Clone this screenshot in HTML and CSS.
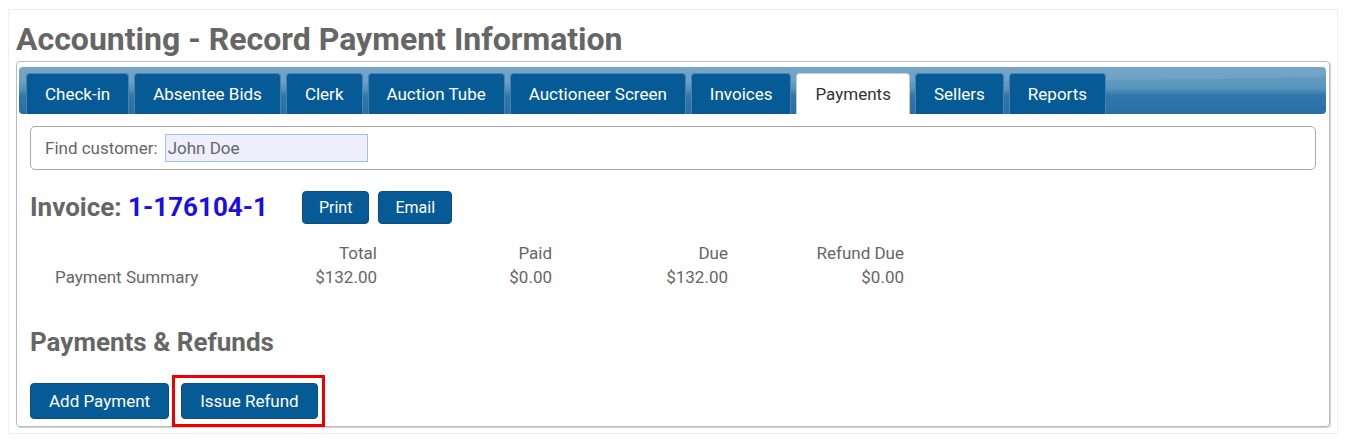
FILE: index.html
```html
<!DOCTYPE html>
<html lang="en">
<head>
  <meta charset="UTF-8">
  <title>Accounting - Record Payment Information</title>
  <link rel="stylesheet" href="styles.css">
</head>
<body>
  <div class="page">
    <h1 class="page-title">Accounting - Record Payment Information</h1>

    <div class="panel">
      <ul class="tabs">
        <li class="tab">Check-in</li>
        <li class="tab">Absentee Bids</li>
        <li class="tab">Clerk</li>
        <li class="tab">Auction Tube</li>
        <li class="tab">Auctioneer Screen</li>
        <li class="tab">Invoices</li>
        <li class="tab active">Payments</li>
        <li class="tab">Sellers</li>
        <li class="tab">Reports</li>
      </ul>

      <div class="content">
        <div class="find-box">
          <label for="customer">Find customer:</label>
          <input type="text" id="customer" value="John Doe">
        </div>

        <div class="invoice-row">
          <h2 class="invoice-title">Invoice: <span class="invoice-no">1-176104-1</span></h2>
          <button class="btn btn-small">Print</button>
          <button class="btn btn-small">Email</button>
        </div>

        <div class="summary">
          <div></div>
          <div class="num">Total</div>
          <div class="num">Paid</div>
          <div class="num">Due</div>
          <div class="num">Refund Due</div>
          <div>Payment Summary</div>
          <div class="num">$132.00</div>
          <div class="num">$0.00</div>
          <div class="num">$132.00</div>
          <div class="num">$0.00</div>
        </div>

        <h2 class="section-title">Payments &amp; Refunds</h2>

        <div class="actions">
          <button class="btn">Add Payment</button>
          <div class="highlight">
            <button class="btn">Issue Refund</button>
          </div>
        </div>
      </div>
    </div>
  </div>
</body>
</html>
```

FILE: styles.css
```css
body {
  margin: 0;
  padding: 9px 10px 10px 8px;
  font-family: Roboto, "Liberation Sans", Arial, sans-serif;
  color: #555;
  background: #fff;
}

.page {
  border: 1px solid #eee;
  padding: 0 7px 7px 7px;
  height: 425px;
  box-sizing: border-box;
}

.page-title {
  margin: 0;
  padding-top: 10px;
  height: 51px;
  box-sizing: border-box;
  font-size: 32px;
  font-weight: bold;
  color: #666;
  line-height: 38px;
}

.panel {
  border: 1px solid #bbb;
  box-shadow: 1px 1px 1px #ccc;
  border-radius: 4px;
  padding: 5px 3px 0 2px;
  height: 366px;
  box-sizing: border-box;
}

.tabs {
  list-style: none;
  margin: 0;
  padding: 6px 7px 0 7px;
  display: flex;
  gap: 5px;
  height: 47px;
  box-sizing: border-box;
  border-radius: 4px;
  background:
    radial-gradient(ellipse 140% 60% at 30% 0%, rgba(255,255,255,0.08) 60%, transparent 61%),
    linear-gradient(#6a9fc4 0%, #5b95bd 45%, #3079ac 60%, #2a6ea3 100%);
}

.tab {
  padding: 0 18px;
  height: 41px;
  line-height: 41px;
  font-size: 17px;
  color: #fff;
  background: #065b96;
  border: 1px solid #4f82ab;
  border-bottom: none;
  border-radius: 4px 4px 0 0;
  box-sizing: border-box;
}

.tab.active {
  background: #fff;
  color: #333;
  border-color: #ccc;
}

.content {
  padding: 12px 10px 0 11px;
}

.find-box {
  display: flex;
  align-items: center;
  gap: 7px;
  height: 44px;
  box-sizing: border-box;
  border: 1px solid #aaa;
  border-radius: 5px;
  padding: 0 14px;
  font-size: 17px;
  color: #666;
}

.find-box input {
  width: 203px;
  height: 28px;
  box-sizing: border-box;
  border: 1px solid #9cc3e5;
  background: #eeeefc;
  font-family: inherit;
  font-size: 17px;
  color: #666;
  padding: 0 2px;
}

.invoice-row {
  display: flex;
  align-items: center;
  gap: 9px;
  margin-top: 21px;
}

.invoice-title {
  margin: 0 25px 0 0;
  font-size: 26px;
  font-weight: bold;
  color: #666;
  line-height: 33px;
}

.invoice-no {
  color: #1c0de0;
}

.btn {
  background: #065b96;
  color: #fff;
  border: 1px solid #0a4f80;
  border-radius: 4px;
  font-family: inherit;
  font-size: 17px;
  padding: 0 18px;
  height: 36px;
}

.btn-small {
  font-size: 16px;
  height: 33px;
  padding: 0 16px;
}

.summary {
  display: grid;
  grid-template-columns: 146px 176px 175px 176px 176px;
  margin: 17px 0 0 25px;
  font-size: 17px;
  line-height: 24px;
  color: #666;
}

.num {
  text-align: right;
}

.section-title {
  margin: 37px 0 0 0;
  font-size: 26px;
  font-weight: bold;
  color: #666;
  line-height: 32px;
}

.actions {
  display: flex;
  align-items: center;
  margin-top: 17px;
}

.highlight {
  border: 3px solid #e00;
  padding: 5px 4px 5px 6px;
  margin-left: 3px;
}
```
